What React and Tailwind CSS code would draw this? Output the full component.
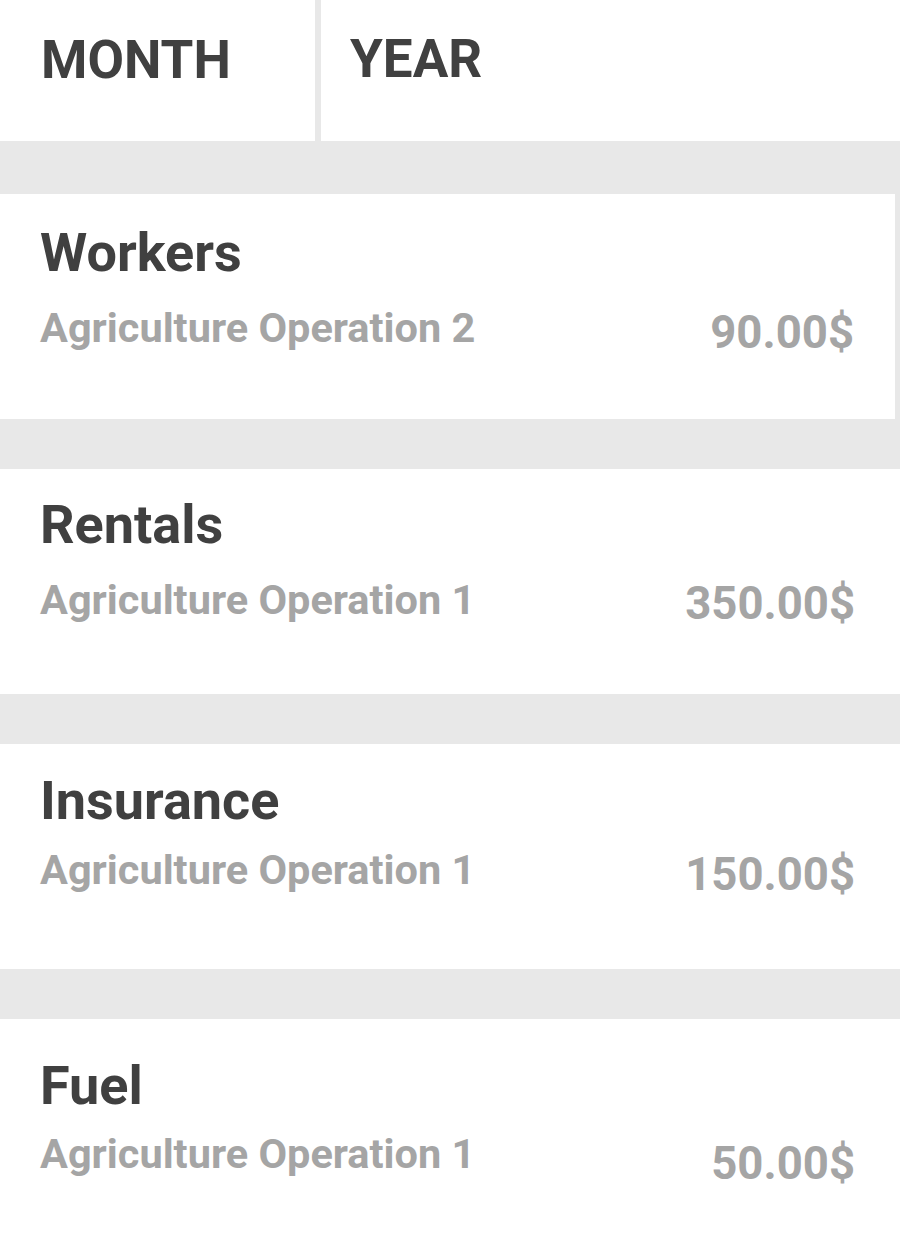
import React from 'react';

const items = [
  { title: 'Workers', op: 'Agriculture Operation 2', amount: '90.00$', pt: 'pt-[32px]', gap: 'mt-[27px]', amt: 'mt-[3px]', narrow: true },
  { title: 'Rentals', op: 'Agriculture Operation 1', amount: '350.00$', pt: 'pt-[29px]', gap: 'mt-[27px]', amt: 'mt-[2px]' },
  { title: 'Insurance', op: 'Agriculture Operation 1', amount: '150.00$', pt: 'pt-[30px]', gap: 'mt-[21px]', amt: 'mt-[3px]' },
  { title: 'Fuel', op: 'Agriculture Operation 1', amount: '50.00$', pt: 'pt-[40px]', gap: 'mt-[20px]', amt: 'mt-[8px]' },
];

const ExpenseCard = ({ item }) => (
  <div
    className={`bg-white h-[225px] pl-[40px] ${item.pt} ${
      item.narrow ? 'w-[895px] pr-[41px]' : 'w-full pr-[45px]'
    }`}
  >
    <h3 className="text-[54px] leading-none font-bold text-[#404040]">{item.title}</h3>
    <div className={`flex justify-between items-start ${item.gap}`}>
      <span className="text-[41.5px] leading-none font-bold text-[#a5a5a5]">{item.op}</span>
      <span className={`text-[45.5px] leading-none font-bold text-[#a5a5a5] ${item.amt}`}>{item.amount}</span>
    </div>
  </div>
);

export default function App() {
  return (
    <div className="w-[900px] h-[1240px] overflow-hidden bg-[#e8e8e8] font-['Roboto',sans-serif]">
      {/* Tabs */}
      <div className="flex h-[141px] bg-white">
        <div className="w-[315px] pl-[41px] pt-[34px]">
          <span className="text-[53px] leading-none font-bold text-[#404040]">MONTH</span>
        </div>
        <div className="w-[6px] bg-[#e8e8e8]" />
        <div className="flex-1 pl-[29px] pt-[33px]">
          <span className="text-[53px] leading-none font-bold text-[#404040]">YEAR</span>
        </div>
      </div>

      <div className="flex flex-col gap-[50px] pt-[53px]">
        {items.map((item) => (
          <ExpenseCard key={item.title} item={item} />
        ))}
      </div>
    </div>
  );
}
